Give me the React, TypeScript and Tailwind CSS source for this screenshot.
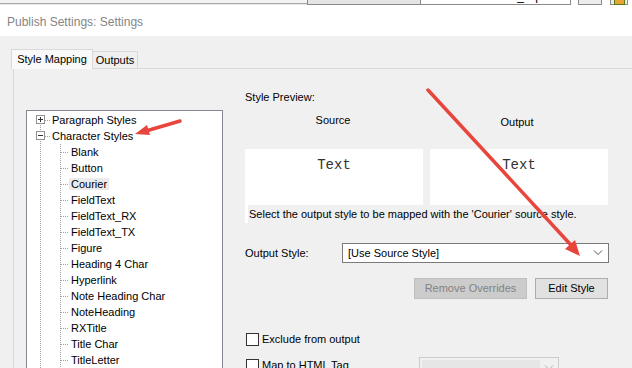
import React from "react";

const ui = { fontFamily: "'Liberation Sans', Arial, sans-serif" };

const treeChildren = [
  "Blank",
  "Button",
  "Courier",
  "FieldText",
  "FieldText_RX",
  "FieldText_TX",
  "Figure",
  "Heading 4 Char",
  "Hyperlink",
  "Note Heading Char",
  "NoteHeading",
  "RXTitle",
  "Title Char",
  "TitleLetter",
];

function TreeLines() {
  return (
    <svg className="absolute left-0 top-0" width="197" height="270" shapeRendering="crispEdges">
      <g stroke="#a0a0a0" strokeDasharray="1 1" fill="none">
        <line x1="13.5" y1="14" x2="13.5" y2="20" />
        <line x1="13.5" y1="30" x2="13.5" y2="270" />
        <line x1="18" y1="9.5" x2="24" y2="9.5" />
        <line x1="18" y1="25.5" x2="24" y2="25.5" />
        <line x1="33.5" y1="33" x2="33.5" y2="270" />
        {treeChildren.map((_, i) => (
          <line key={i} x1="34" y1={41.5 + 16 * i} x2="41" y2={41.5 + 16 * i} />
        ))}
      </g>
      <g stroke="#919191" fill="#fff">
        <rect x="9.5" y="4.5" width="8" height="8" />
        <rect x="9.5" y="20.5" width="8" height="8" />
      </g>
      <g stroke="#333" fill="none">
        <line x1="11" y1="8.5" x2="16" y2="8.5" />
        <line x1="13.5" y1="6" x2="13.5" y2="11" />
        <line x1="11" y1="24.5" x2="16" y2="24.5" />
      </g>
    </svg>
  );
}

function StyleTree() {
  return (
    <div className="relative mt-[41px] h-[300px] w-[197px] shrink-0 overflow-hidden border border-[#828790] bg-white">
      <TreeLines />
      <div className="relative pt-[1px] text-[11px] leading-[16px] text-black">
        <div className="h-4 pl-[25px]">Paragraph Styles</div>
        <div className="h-4 pl-[25px]">Character Styles</div>
        {treeChildren.map((name) => (
          <div key={name} className="h-4 pl-[44px]">
            <span className={name === "Courier" ? "-ml-[2px] bg-[#ebebeb] px-[2px]" : ""}>{name}</span>
          </div>
        ))}
      </div>
    </div>
  );
}

function Checkbox() {
  return <div className="h-[13px] w-[13px] shrink-0 border border-[#333] bg-white" />;
}

function Chevron({ color }: { color: string }) {
  return (
    <svg width="10" height="6" viewBox="0 0 10 6">
      <path d="M1 0.5 L5 4.5 L9 0.5" stroke={color} fill="none" strokeWidth="1" />
    </svg>
  );
}

function MappingPanel() {
  return (
    <div className="ml-[22px] flex w-[364px] shrink-0 flex-col pt-[21px] text-[11px] text-black">
      <div className="h-[14px] leading-[14px]">Style Preview:</div>

      <div className="mt-[9px] flex h-[16px] gap-[7px] leading-[14px]">
        <div className="w-[176px] text-center">Source</div>
        <div className="w-[178px] pt-[2px] text-center">Output</div>
      </div>

      <div className="mt-[20px] flex gap-[7px]">
        {["src", "out"].map((k) => (
          <div key={k} className="h-[56px] w-[178px] bg-white pt-[8px] text-center">
            <span className="text-[14px] leading-[16px] text-[#333]" style={{ fontFamily: "'Liberation Mono', 'Courier New', monospace" }}>
              Text
            </span>
          </div>
        ))}
      </div>

      <div className="flex h-[18px] leading-[16px]">
        <div className="w-[3px] bg-white" />
        <div className="pl-[1px] pt-[1px]">Select the output style to be mapped with the 'Courier' source style.</div>
      </div>

      <div className="mt-[20px] flex h-[20px] items-center">
        <div className="w-[97px]">Output Style:</div>
        <div className="flex h-[20px] w-[267px] items-center justify-between border border-[#7a7a7a] bg-white pl-[5px] pr-[5px]">
          <span>[Use Source Style]</span>
          <Chevron color="#555" />
        </div>
      </div>

      <div className="mt-[15px] flex justify-end gap-[8px] pr-[1px]">
        <div className="flex h-[21px] w-[113px] items-center justify-center border border-[#bfbfbf] bg-[#cccccc] text-[#838383]">
          Remove Overrides
        </div>
        <div className="flex h-[21px] w-[73px] items-center justify-center border border-[#adadad] bg-[#e1e1e1]">
          Edit Style
        </div>
      </div>

      <div className="mt-[34px] flex items-center gap-[3px] pl-[1px]">
        <Checkbox />
        <span className="leading-[13px]">Exclude from output</span>
      </div>

      <div className="mt-[11px] flex items-start pl-[1px]">
        <div className="flex w-[173px] items-start gap-[3px] pt-[2px]">
          <Checkbox />
          <span className="leading-[13px]">Map to HTML Tag</span>
        </div>
        <div className="flex h-[22px] w-[140px] items-center justify-between border border-[#cccccc] bg-[#f0f0f0] p-[2px] pr-[4px]">
          <div className="h-full w-[118px] bg-[#e6e6e6]" />
          <Chevron color="#b0b0b0" />
        </div>
      </div>
    </div>
  );
}

function Arrows() {
  return (
    <svg className="pointer-events-none absolute left-0 top-0" width="632" height="368">
      <g stroke="#e8453c" strokeWidth="3.5" strokeLinecap="round" fill="#e8453c">
        <line x1="180" y1="121" x2="146" y2="131" />
        <line x1="428" y1="90" x2="570" y2="244" />
      </g>
      <g fill="#e8453c">
        <polygon points="135,134 147,125 150,135" />
        <polygon points="580,256 565,249 575,240" />
      </g>
    </svg>
  );
}

function BackgroundToolbar() {
  return (
    <div className="flex h-[5px] overflow-hidden bg-white text-[12px]">
      <div className="relative w-[307px] shrink-0 bg-[#f3f3f3]">
        <div className="mt-[3px] h-[2px] border-t border-[#a9a9a9] bg-[#e6e6e6]" />
      </div>
      <div className="-mt-[14px] flex h-[19px] w-[114px] shrink-0 items-center justify-center border border-[#8a8a8a] bg-[#e4e4e4]">
        Source Document:
      </div>
      <div className="-ml-[1px] -mt-[14px] flex h-[19px] w-[151px] shrink-0 items-center justify-between border border-[#8a8a8a] bg-white px-[4px]">
        <span>Waterfallversion7_clip.b</span>
        <span className="text-[8px]">▼</span>
      </div>
      <div className="ml-[7px] -mt-[14px] h-[19px] w-[24px] shrink-0 border border-[#8a8a8a] bg-[#ececec]" />
      <div className="ml-[8px] -mt-[14px] h-[19px] w-[18px] shrink-0 border border-[#8a8a8a] bg-[#ececec]">
        <div className="mx-auto mt-[12px] h-[6px] w-[11px] border border-[#5a7a1a] bg-[#e8a531]" />
      </div>
    </div>
  );
}

export default function App() {
  return (
    <div className="relative h-[368px] w-[632px] overflow-hidden bg-[#f0f0f0]" style={ui}>
      <BackgroundToolbar />

      {/* Title bar */}
      <div className="flex h-[31px] items-center bg-white pl-[7px] pt-[2px] text-[12px] text-[#858585]">
        Publish Settings: Settings
      </div>

      {/* Tabs */}
      <div className="flex h-[32px] items-end pl-[11px] text-[11px] text-black">
        <div className="relative z-10 -mb-[1px] flex h-[20px] w-[82px] items-center justify-center border border-b-0 border-[#d9d9d9] bg-[#f9f9f9]">
          Style Mapping
        </div>
        <div className="-ml-[1px] flex h-[17px] w-[46px] items-center justify-center border border-b-0 border-[#d9d9d9] bg-[#f0f0f0]">
          Outputs
        </div>
      </div>

      {/* Tab pane */}
      <div className="ml-[13px] flex h-[400px] border-l border-t border-[#d9d9d9] bg-[#f0f0f0] pl-[12px]">
        <StyleTree />
        <MappingPanel />
      </div>

      <Arrows />
    </div>
  );
}
